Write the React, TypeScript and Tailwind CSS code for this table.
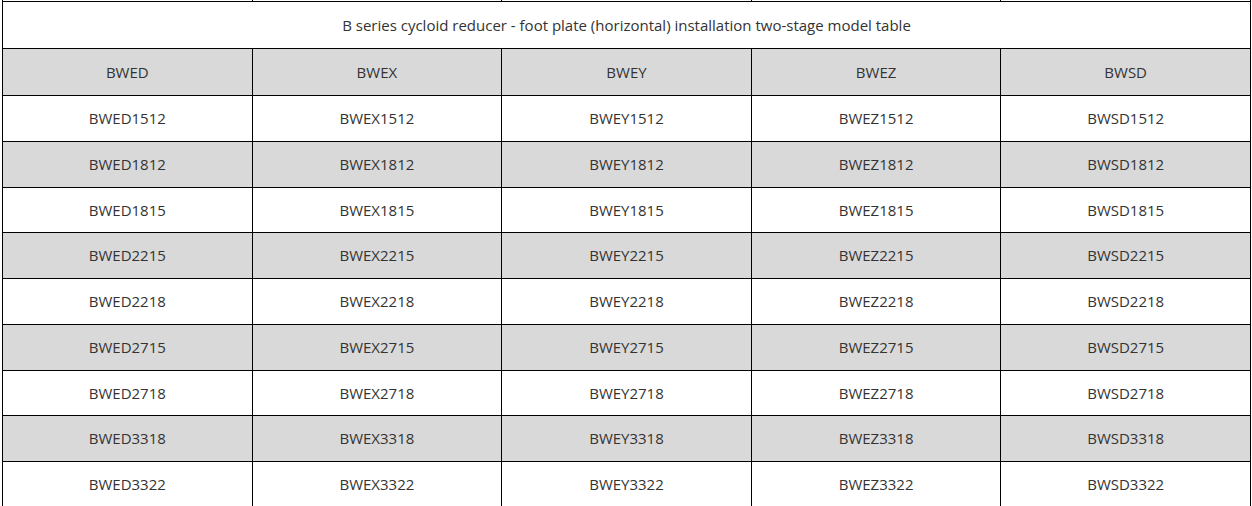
import React from "react";

const cols = ["BWED", "BWEX", "BWEY", "BWEZ", "BWSD"];
const nums = ["1512", "1812", "1815", "2215", "2218", "2715", "2718", "3318", "3322"];

export default function App() {
  return (
    <div className="h-[506px] w-[1252px] overflow-hidden bg-white" style={{ fontFamily: '"Open Sans", "Noto Sans", sans-serif' }}>
      <div className="-mt-[20px] pl-[2px]">
        <table className="w-[1249px] table-fixed border-collapse text-[15px] text-[#333]">
          <tbody>
            <tr className="h-[21px]">
              {cols.map((c) => (
                <td key={c} className="border border-black p-0"></td>
              ))}
            </tr>
            <tr className="h-[47px]">
              <td colSpan={5} className="border border-black p-0 text-center align-middle">
                B series cycloid reducer - foot plate (horizontal) installation two-stage model table
              </td>
            </tr>
            <tr className="h-[47px] bg-[#d9d9d9]">
              {cols.map((c) => (
                <td key={c} className="border border-black p-0 text-center align-middle">
                  {c}
                </td>
              ))}
            </tr>
            {nums.map((n, i) => (
              <tr key={n} className={`h-[45.75px] ${i % 2 === 1 ? "bg-[#d9d9d9]" : "bg-white"}`}>
                {cols.map((c) => (
                  <td key={c} className="border border-black p-0 text-center align-middle">
                    {c}
                    {n}
                  </td>
                ))}
              </tr>
            ))}
          </tbody>
        </table>
      </div>
    </div>
  );
}
